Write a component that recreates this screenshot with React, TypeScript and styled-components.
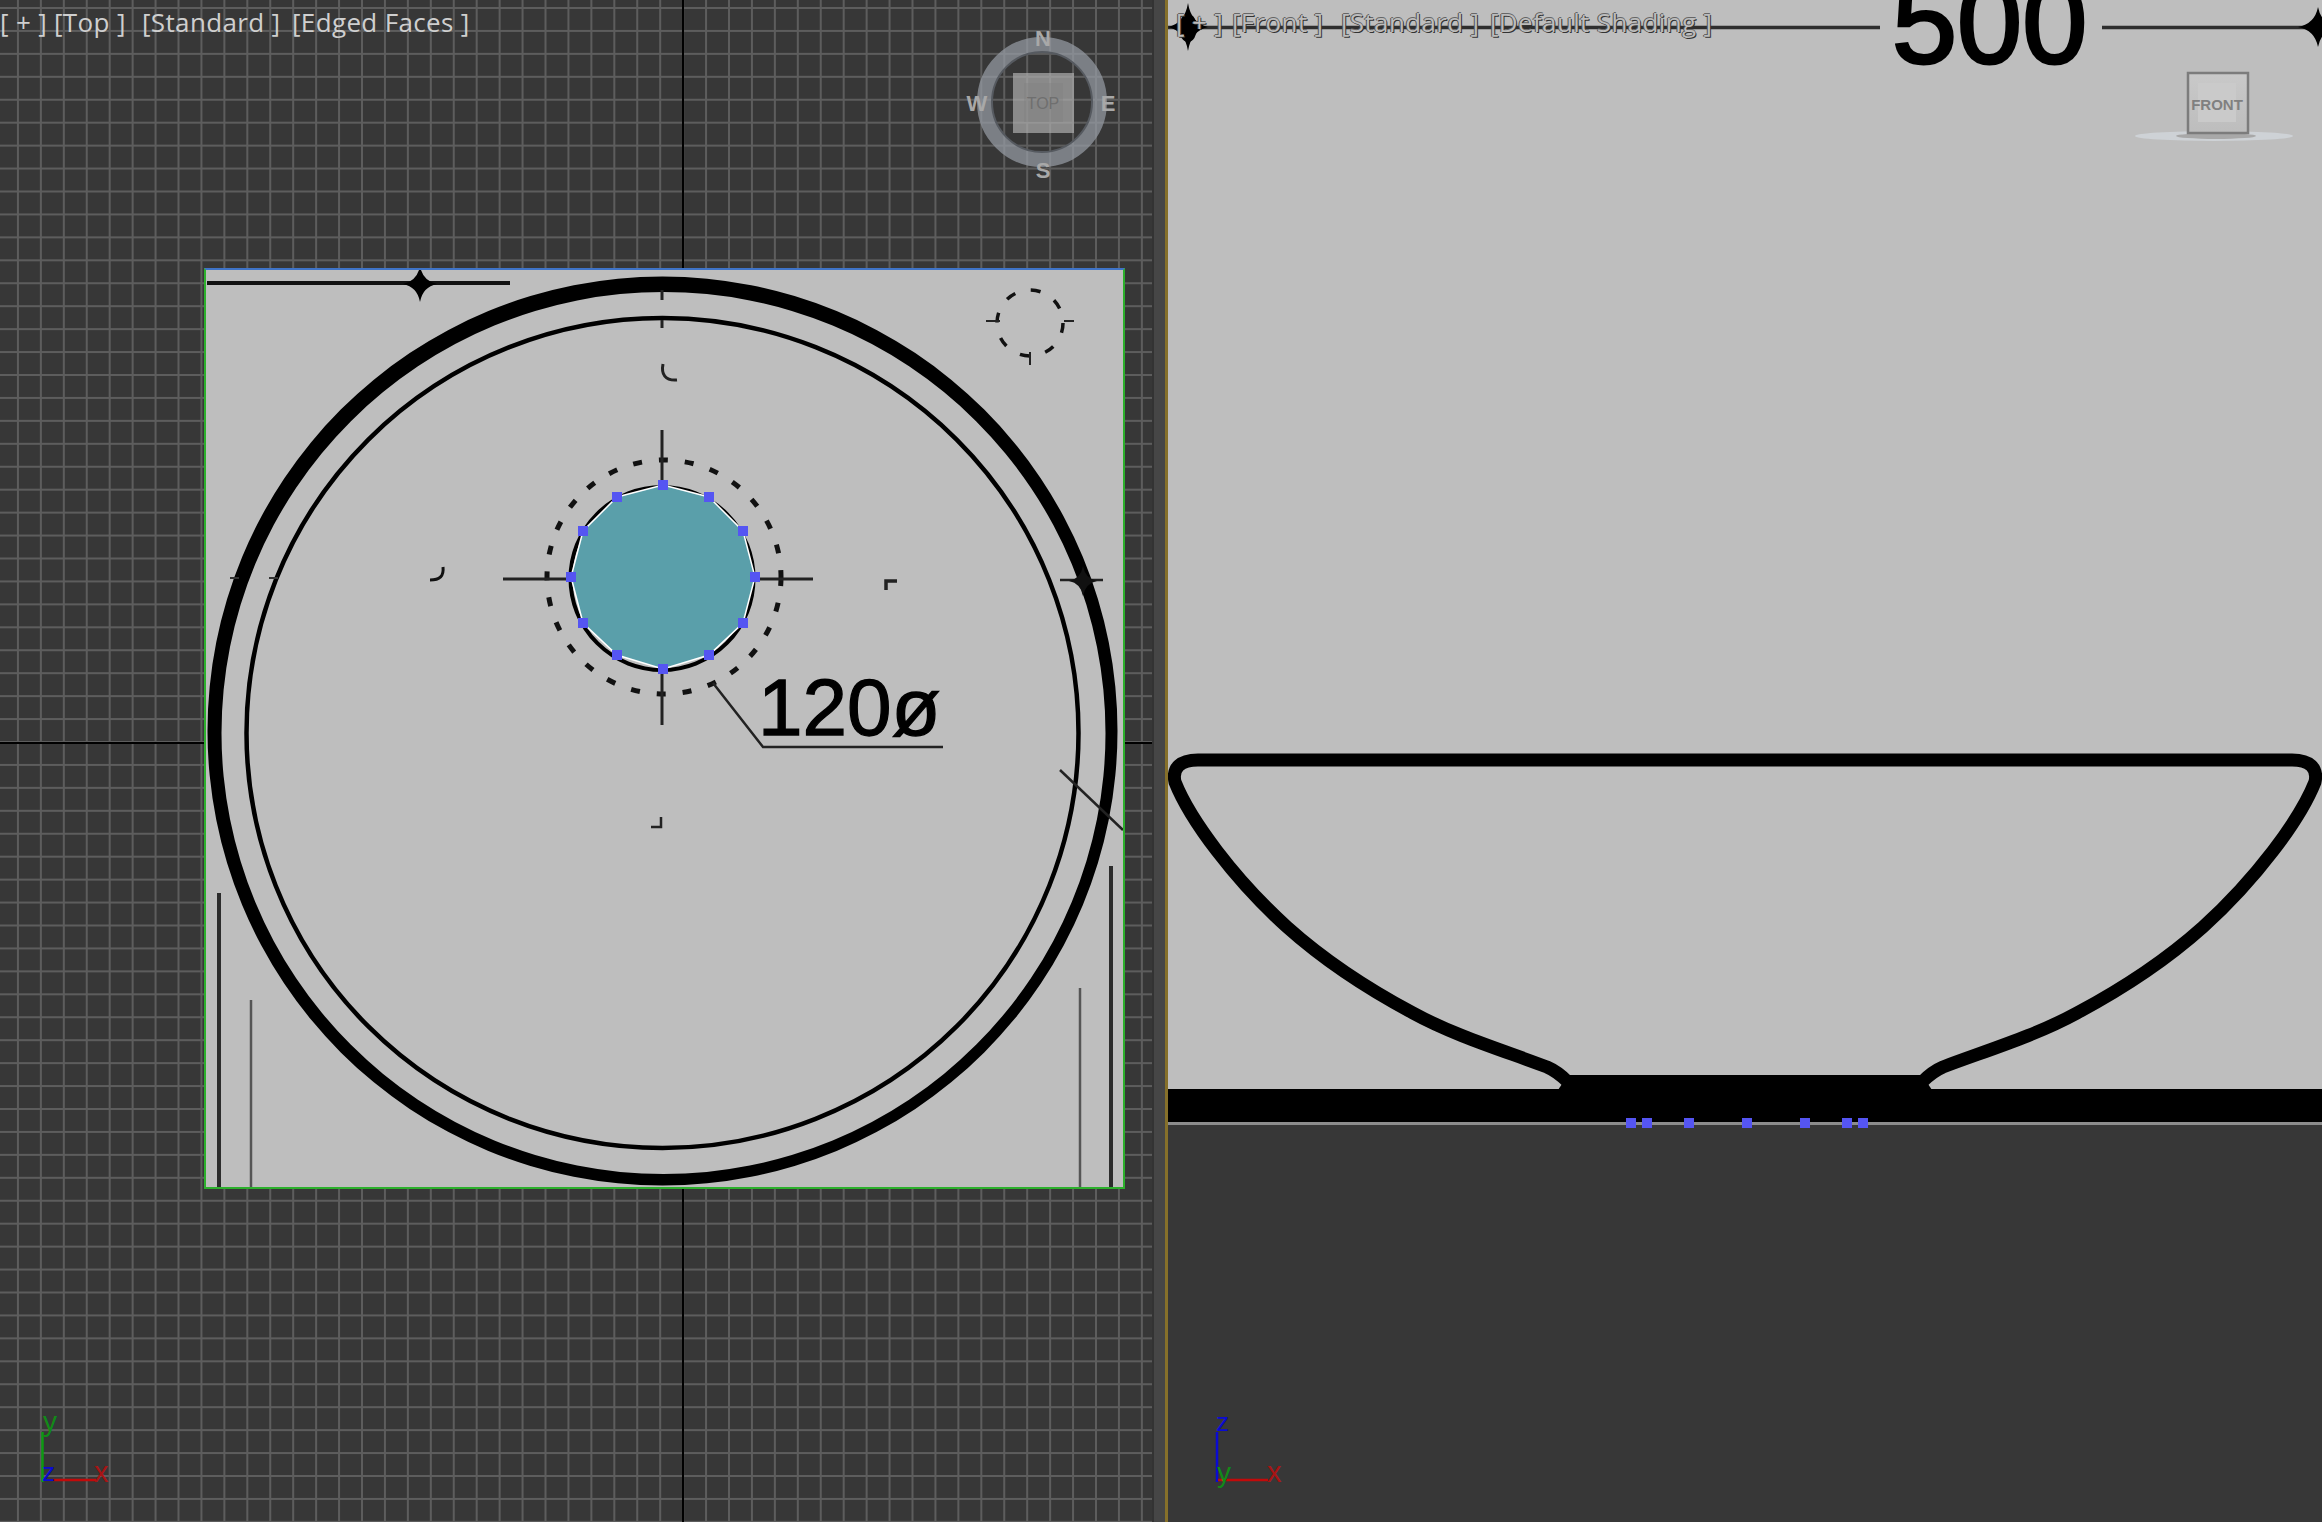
import React from 'react'
import styled, { createGlobalStyle } from 'styled-components'

const LABEL_FONT = '"Open Sans", "Noto Sans", sans-serif'
const DRAWING_FONT = '"Liberation Sans", Arial, sans-serif'

const GlobalStyle = createGlobalStyle`
  html, body {
    margin: 0;
    padding: 0;
    background: #373737;
    overflow: hidden;
  }
`

const Workspace = styled.div`
  display: grid;
  grid-template-columns: 1152px 16px 1fr;
  width: 2322px;
  height: 1522px;
`

const TopViewport = styled.section`
  position: relative;
  overflow: hidden;
  background-color: #373737;
  background-image:
    linear-gradient(to right, #5d5d5d 2px, transparent 2px),
    linear-gradient(to bottom, #5d5d5d 2px, transparent 2px);
  background-size: 22.95px 22.95px;
  background-position: -6px 7px;

  /* world axes */
  &::before {
    content: '';
    position: absolute;
    left: 682px;
    top: 0;
    bottom: 0;
    width: 2px;
    background: #000;
  }

  &::after {
    content: '';
    position: absolute;
    left: 0;
    right: 0;
    top: 742px;
    height: 2px;
    background: #000;
  }
`

const Gutter = styled.div`
  box-sizing: border-box;
  background: #464646;
  border-left: 2px solid #333;
  border-right: 3px solid #86702a;
`

const FrontViewport = styled.section`
  position: relative;
  overflow: hidden;
  display: flex;
  flex-direction: column;
  background: #373737;
`

const Backdrop = styled.div`
  height: 1122px;
  background: #bebebe;
  border-bottom: 3px solid #8c8c8c;
`

const LabelBar = styled.div<{ $x: number; $dim?: boolean }>`
  position: absolute;
  z-index: 3;
  top: 6px;
  left: ${(p) => p.$x}px;
  display: flex;
  font-family: ${LABEL_FONT};
  font-size: 26px;
  line-height: 33px;
  letter-spacing: 0.35px;
  white-space: pre;
  color: ${(p) => (p.$dim ? '#bcbcbc' : '#cfcfcf')};
  text-shadow: ${(p) => (p.$dim ? '1px 1px 0 #333, -1px 0 0 #555, 0 -1px 0 #666' : 'none')};
`

const LabelItem = styled.span<{ $w: number }>`
  display: block;
  width: ${(p) => p.$w}px;
`

const ImagePlane = styled.div`
  position: absolute;
  z-index: 1;
  left: 204px;
  top: 268px;
  width: 921px;
  height: 921px;
  box-sizing: border-box;
  background: #bebebe;
  border: 2px solid #2cb02c;
  border-top-color: #3f74c8;
`

const Drawing = styled.svg`
  display: block;
  width: 100%;
  height: 100%;
`

const Overlay = styled.svg<{ $x: number; $y: number; $w: number; $h: number }>`
  position: absolute;
  z-index: 2;
  left: ${(p) => p.$x}px;
  top: ${(p) => p.$y}px;
  width: ${(p) => p.$w}px;
  height: ${(p) => p.$h}px;
  overflow: visible;
`

const star = (x: number, y: number, w: number, h: number) => {
  const cx = w * 0.16
  const cy = h * 0.16
  return (
    `M${x} ${y - h}Q${x + cx} ${y - cy} ${x + w} ${y}Q${x + cx} ${y + cy} ${x} ${y + h}` +
    `Q${x - cx} ${y + cy} ${x - w} ${y}Q${x - cx} ${y - cy} ${x} ${y - h}Z`
  )
}

const ellipse = (cx: number, cy: number, rx: number, ry: number) =>
  `M${cx - rx} ${cy}A${rx} ${ry} 0 1 1 ${cx + rx} ${cy}A${rx} ${ry} 0 1 1 ${cx - rx} ${cy}Z`

const HOLE_CENTER = { x: 663, y: 577 }
const HOLE_POINTS = [
  [0, -92], [46, -80], [80, -46], [92, 0], [80, 46], [46, 78],
  [0, 92], [-46, 78], [-80, 46], [-92, 0], [-80, -46], [-46, -80],
].map(([dx, dy]) => [HOLE_CENTER.x + dx, HOLE_CENTER.y + dy])

const FRONT_HANDLES = [1631, 1647, 1689, 1747, 1805, 1847, 1863]

const BOWL_SIDE =
  'M1745 760L1198 760C1180 760 1172 768 1175 782C1190 820 1235 880 1287 927' +
  'C1325 961 1368 989 1413 1013C1455 1036 1505 1051 1547 1067C1554 1070 1560 1074 1568 1082'

function TopDrawing() {
  return (
    <Drawing viewBox="206 270 917 917">
      <rect x="206" y="270" width="917" height="917" fill="#bebebe" />
      <path
        fillRule="evenodd"
        d={ellipse(662.5, 731, 455, 454.5) + ellipse(663.5, 733, 442, 441)}
        fill="#000"
      />
      <ellipse cx="662.5" cy="733" rx="416" ry="415" fill="none" stroke="#000" strokeWidth="4.5" />

      <path d="M207 283L510 283" stroke="#111" strokeWidth="4" />
      <path d={star(420, 284, 17, 18)} fill="#000" />

      <path d="M662 290V300M662 320V328" stroke="#222" strokeWidth="3" />
      <path d="M663 364C661 374 665 381 677 380" fill="none" stroke="#222" strokeWidth="3" />

      <circle cx="1030" cy="323" r="33" fill="none" stroke="#111" strokeWidth="3.5" strokeDasharray="10 16" />
      <path d="M986 321H1000M1064 321H1074M1030 352V365" stroke="#222" strokeWidth="2" />

      <path d="M443 567C444 576 440 580 430 580" fill="none" stroke="#111" strokeWidth="3" />
      <path d="M886 590V581H897" fill="none" stroke="#222" strokeWidth="3.5" />
      <path d="M651 827H661V817" fill="none" stroke="#222" strokeWidth="2.5" />
      <path d="M230 578H284" stroke="#333" strokeWidth="2" strokeDasharray="9 30" />
      <path d="M1060 580H1103" stroke="#222" strokeWidth="2.5" />
      <path d={star(1083, 581, 14, 15)} fill="#111" />
      <path d="M1060 770L1123 830" stroke="#222" strokeWidth="2.5" />

      <path d="M219 893V1187" stroke="#2c2c2c" strokeWidth="4" />
      <path d="M251 1000V1187" stroke="#555" strokeWidth="2.5" />
      <path d="M1111 866V1187" stroke="#2c2c2c" strokeWidth="4" />
      <path d="M1080 988V1187" stroke="#555" strokeWidth="2.5" />

      <circle cx="664" cy="577" r="117" fill="none" stroke="#111" strokeWidth="5" strokeDasharray="9 17" />
      <path d="M503 579H813M662 430V725" stroke="#222" strokeWidth="3" />
      <circle cx="662" cy="578.5" r="91.5" fill="none" stroke="#000" strokeWidth="4" />
      <polygon
        points={HOLE_POINTS.map((p) => p.join(',')).join(' ')}
        fill="#5a9faa"
        stroke="#fff"
        strokeWidth="1.5"
      />
      {HOLE_POINTS.map(([x, y]) => (
        <rect key={`${x}-${y}`} x={x - 5} y={y - 5} width="10" height="10" fill="#5555f2" />
      ))}

      <path d="M713 683L763 747H943" fill="none" stroke="#222" strokeWidth="2.5" />
      <text x="758" y="735" fontFamily={DRAWING_FONT} fontSize="80" fill="#000" stroke="#000" strokeWidth="1.3">
        120ø
      </text>
    </Drawing>
  )
}

function FrontDrawing() {
  return (
    <Overlay $x={0} $y={0} $w={1154} $h={1522} viewBox="1168 0 1154 1522">
      <path d="M1168 27.5H1880M2102 27.5H2322" stroke="#2e2e2e" strokeWidth="3.5" />
      <path d={star(1188, 27, 20, 24)} fill="#000" />
      <ellipse cx="1188" cy="28" rx="9" ry="14" fill="#000" />
      <path d={star(2318, 27, 20, 20)} fill="#000" />
      <text x="1892" y="63" fontFamily={DRAWING_FONT} fontSize="117" fill="#000" stroke="#000" strokeWidth="3">
        500
      </text>

      <path d={BOWL_SIDE} fill="none" stroke="#000" strokeWidth="13" />
      <path d={BOWL_SIDE} fill="none" stroke="#000" strokeWidth="13" transform="matrix(-1 0 0 1 3490 0)" />
      <path d="M1568 1075H1922L1932 1090H1558Z" fill="#000" />
      <rect x="1168" y="1089" width="1154" height="33" fill="#000" />
      {FRONT_HANDLES.map((x) => (
        <rect key={x} x={x - 5} y="1118" width="10" height="10" fill="#5555f2" />
      ))}
    </Overlay>
  )
}

function Compass() {
  const letter = { fontFamily: DRAWING_FONT, fontWeight: 700, fontSize: 22, fill: '#a8a8a8', textAnchor: 'middle' as const }
  return (
    <Overlay $x={960} $y={20} $w={170} $h={170} viewBox="960 20 170 170">
      <circle cx="1042" cy="102" r="57.5" fill="none" stroke="rgba(150,155,163,0.72)" strokeWidth="15" />
      <circle cx="1042" cy="102" r="50" fill="none" stroke="#565a60" strokeWidth="2" />
      <rect x="1013" y="73" width="61" height="60" fill="rgba(170,170,170,0.72)" />
      <rect x="1024" y="83" width="39" height="39" fill="rgba(125,125,125,0.35)" />
      <text x="1043" y="109" fontFamily={DRAWING_FONT} fontSize="16" fill="#6f6f6f" textAnchor="middle">TOP</text>
      <text x="1043" y="46" {...letter}>N</text>
      <text x="1043" y="178" {...letter}>S</text>
      <text x="977" y="111" {...letter}>W</text>
      <text x="1108" y="111" {...letter}>E</text>
    </Overlay>
  )
}

function FrontCube() {
  return (
    <Overlay $x={965} $y={70} $w={160} $h={76} viewBox="2133 70 160 76">
      <defs>
        <linearGradient id="cubeFace" x1="0" y1="0" x2="0" y2="1">
          <stop offset="0" stopColor="#c9c9c9" />
          <stop offset="1" stopColor="#bdbdbd" />
        </linearGradient>
      </defs>
      <ellipse cx="2214" cy="136" rx="79" ry="5" fill="#ced2d6" />
      <ellipse cx="2216" cy="136" rx="40" ry="3" fill="#a8a8a8" />
      <rect x="2188" y="73" width="60" height="60" fill="url(#cubeFace)" stroke="#7c7c7c" strokeWidth="2.5" />
      <rect x="2198" y="83" width="38" height="39" fill="#cacaca" />
      <text x="2217" y="110" fontFamily={DRAWING_FONT} fontWeight="700" fontSize="15" fill="#808080" textAnchor="middle">FRONT</text>
    </Overlay>
  )
}

function TripodTop() {
  return (
    <Overlay $x={30} $y={1410} $w={90} $h={85} viewBox="30 1410 90 85">
      <path d="M42.5 1432V1482" stroke="#0d9a12" strokeWidth="2.5" />
      <path d="M53 1480H96" stroke="#c20a0a" strokeWidth="2.5" />
      <text x="43" y="1431" fontFamily={DRAWING_FONT} fontSize="28" fill="#128a18">y</text>
      <text x="42" y="1481" fontFamily={DRAWING_FONT} fontSize="26" fill="#0a0ad2">z</text>
      <text x="94" y="1482" fontFamily={DRAWING_FONT} fontSize="29" fill="#a81414">x</text>
    </Overlay>
  )
}

function TripodFront() {
  return (
    <Overlay $x={37} $y={1410} $w={90} $h={85} viewBox="1205 1410 90 85">
      <path d="M1217 1432V1482" stroke="#0a0ad2" strokeWidth="2.5" />
      <path d="M1218 1480H1268" stroke="#c20a0a" strokeWidth="2.5" />
      <text x="1216" y="1431" fontFamily={DRAWING_FONT} fontSize="26" fill="#0a0ad2">z</text>
      <text x="1217" y="1482" fontFamily={DRAWING_FONT} fontSize="28" fill="#128a18">y</text>
      <text x="1267" y="1482" fontFamily={DRAWING_FONT} fontSize="29" fill="#a81414">x</text>
    </Overlay>
  )
}

export default function App() {
  return (
    <>
      <GlobalStyle />
      <Workspace>
        <TopViewport>
          <LabelBar $x={0}>
            <LabelItem $w={54}>[ + ]</LabelItem>
            <LabelItem $w={88}>[Top ]</LabelItem>
            <LabelItem $w={150}>[Standard ]</LabelItem>
            <LabelItem $w={190}>[Edged Faces ]</LabelItem>
          </LabelBar>
          <ImagePlane>
            <TopDrawing />
          </ImagePlane>
          <Compass />
          <TripodTop />
        </TopViewport>
        <Gutter />
        <FrontViewport>
          <Backdrop />
          <FrontDrawing />
          <LabelBar $x={8} $dim>
            <LabelItem $w={56}>[ + ]</LabelItem>
            <LabelItem $w={109}>[Front ]</LabelItem>
            <LabelItem $w={149}>[Standard ]</LabelItem>
            <LabelItem $w={230}>[Default Shading ]</LabelItem>
          </LabelBar>
          <FrontCube />
          <TripodFront />
        </FrontViewport>
      </Workspace>
    </>
  )
}
